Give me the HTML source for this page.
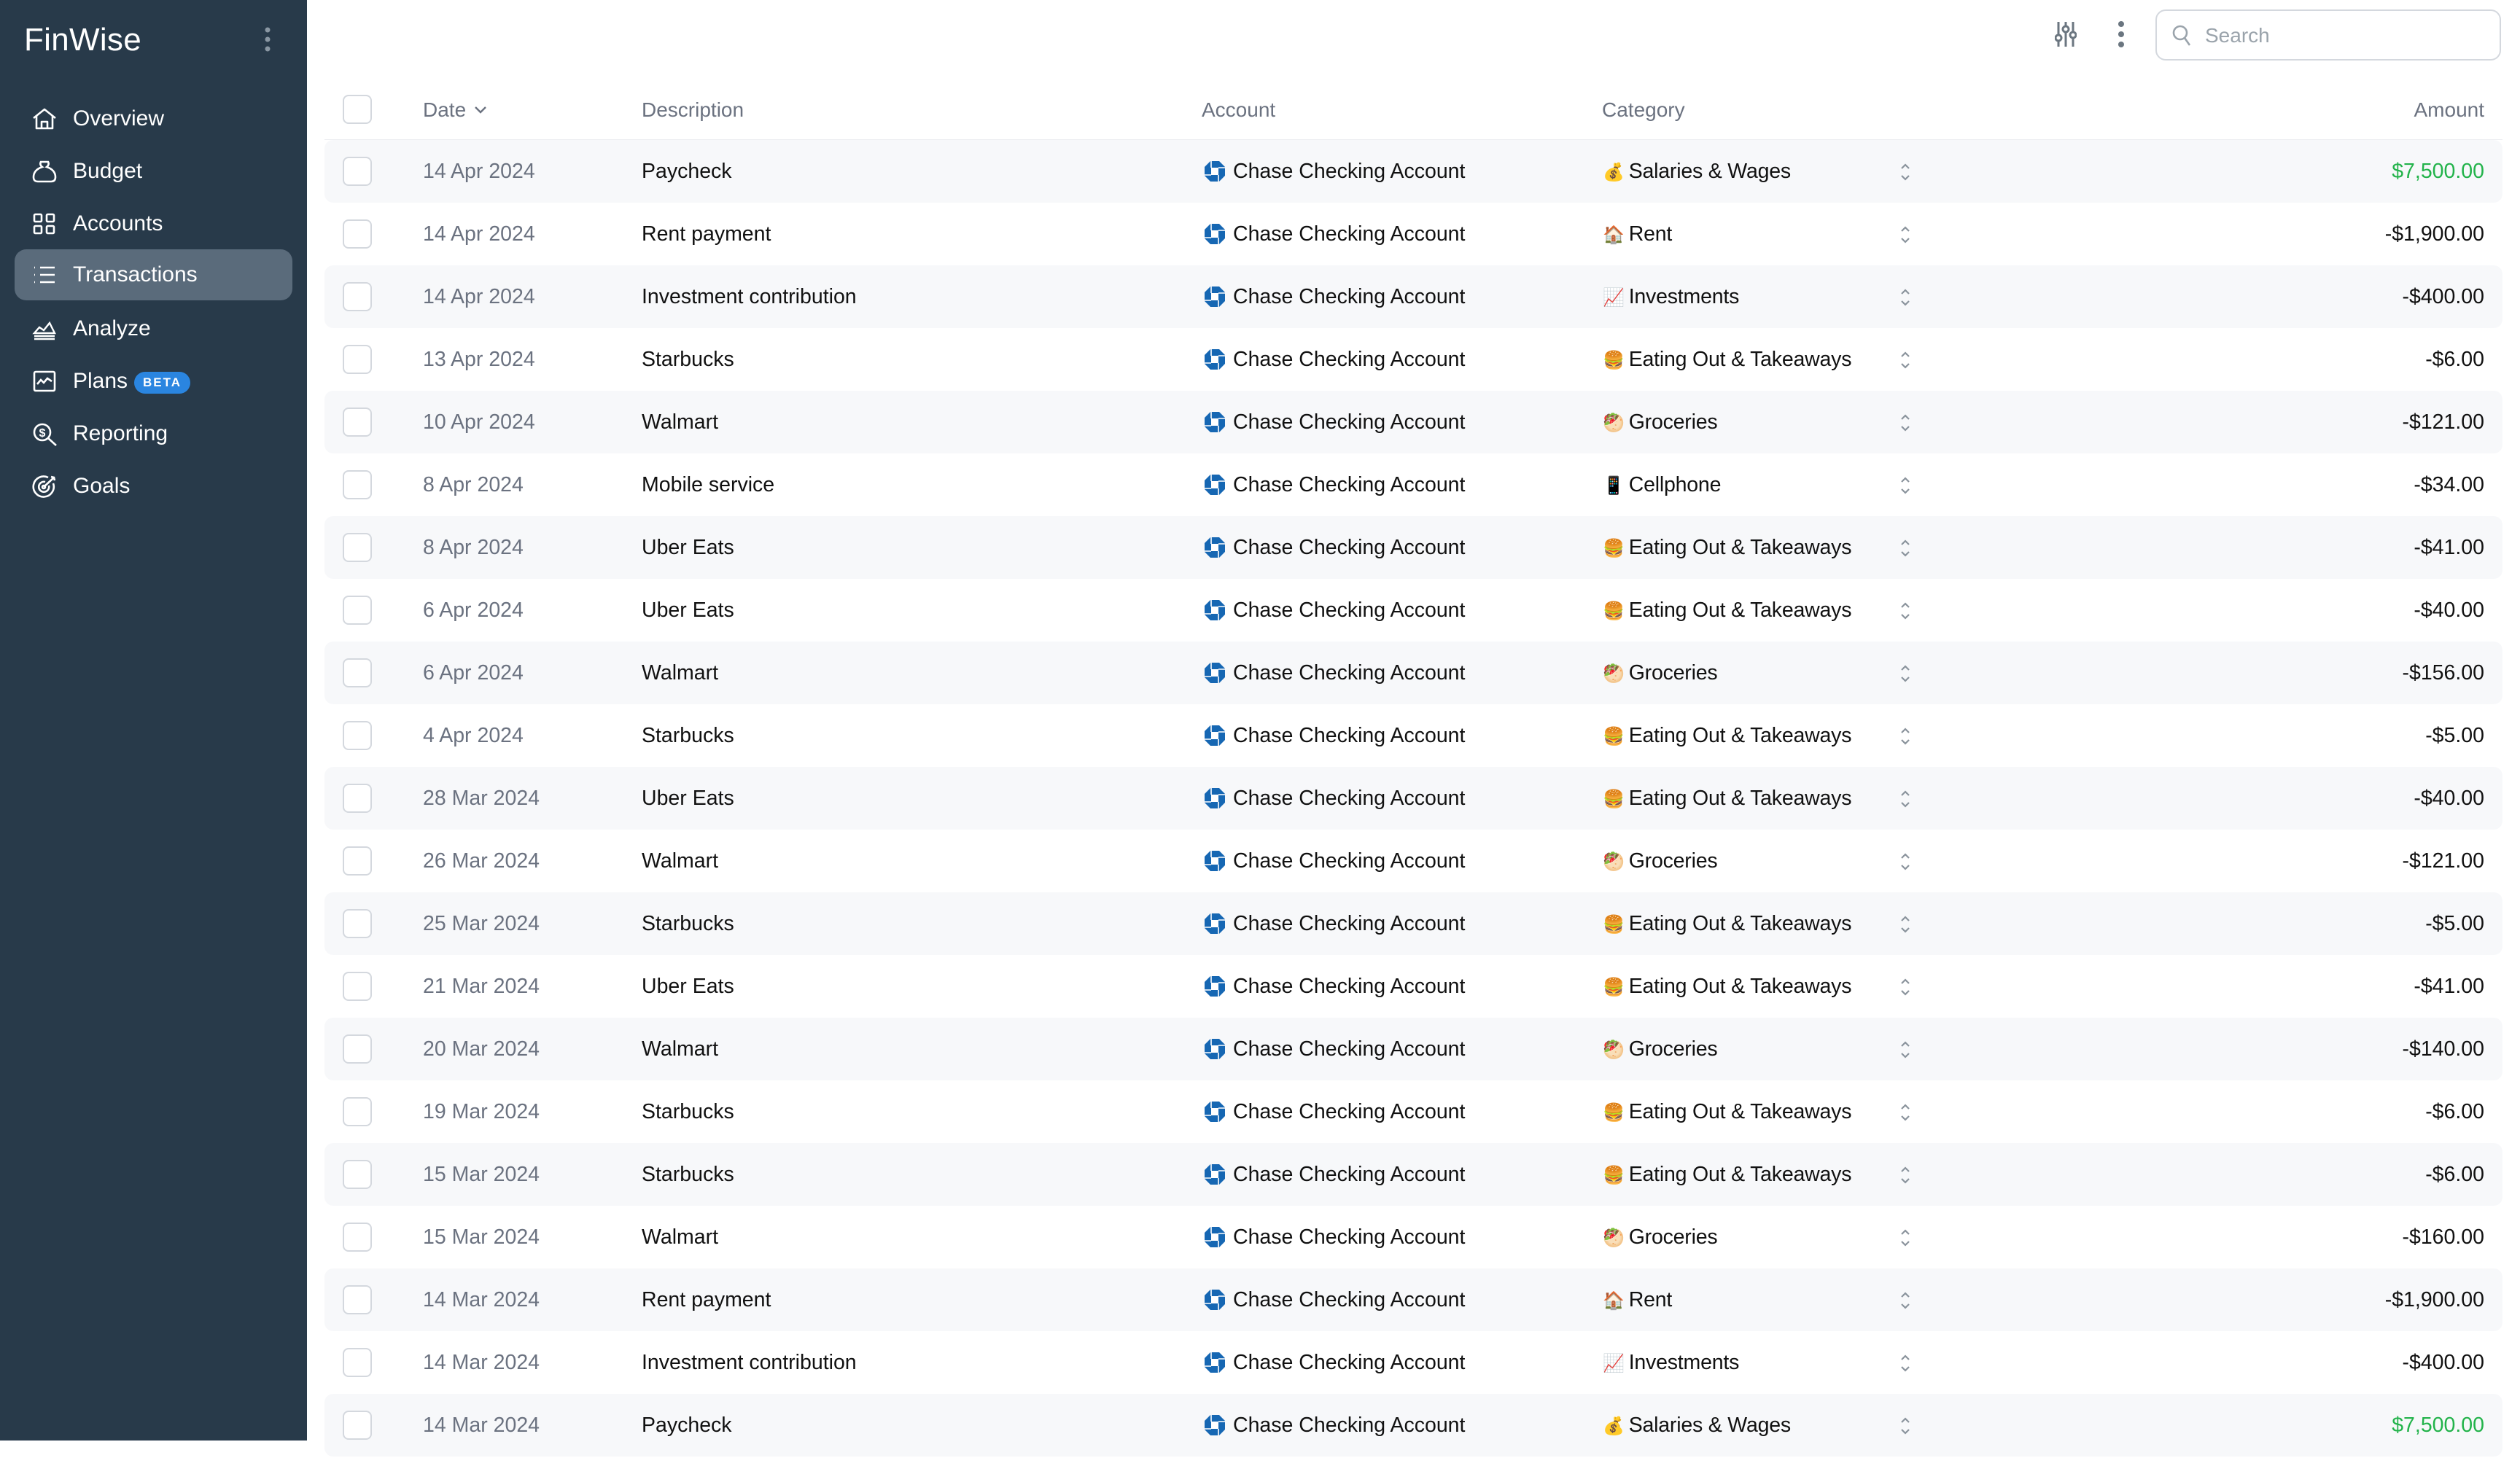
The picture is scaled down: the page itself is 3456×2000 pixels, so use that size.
<!DOCTYPE html>
<html><head><meta charset="utf-8">
<style>
*{box-sizing:border-box;margin:0;padding:0}
html,body{width:3456px;height:1976px;overflow:hidden;background:#fff;font-family:"Liberation Sans","DejaVu Sans",sans-serif}
.side{position:absolute;left:0;top:0;width:421px;height:1976px;background:#283a4a;color:#fff}
.logo{position:absolute;left:33px;top:30px;font-size:44px;letter-spacing:0.3px}
.kebab{position:absolute;left:362px;top:36px}
.nav{position:absolute;left:20px;width:381px;height:70px;border-radius:16px;display:flex;align-items:center;font-size:30px}
.nav.act{background:#5a6b7b}
.nav svg{position:absolute;left:24px;top:19px}
.nav span.t{position:absolute;left:80px}
.beta{display:inline-block;background:#2a85e0;color:#fff;font-size:17px;font-weight:bold;letter-spacing:2px;padding:5px 12px;border-radius:20px;position:absolute;left:164px;top:22px}
.hdr{position:absolute;top:126px;height:50px;font-size:28px;color:#6b7280;display:flex;align-items:center}
.row{position:absolute;left:445px;width:2987px;height:86px;border-radius:12px}
.row.g{background:#f7f8fa}
.row div{position:absolute;top:0;height:86px;line-height:86px;font-size:28.5px;color:#111}
.cb{position:absolute;left:25px;top:23px;width:40px;height:40px;border:2px solid #d4d8de;border-radius:8px;background:#fff}
.d{left:135px;color:#6b7280 !important}
.ds{left:435px}
.ac{left:1206px}
.ac svg{position:absolute;left:0;top:28px}
.ac span{position:absolute;left:40px;white-space:nowrap}
.ca{left:1753px;white-space:nowrap;letter-spacing:-0.2px}
.ca i{font-style:normal;font-size:24px;margin-right:6px}
.ud{left:2160px}
.am{right:25px;text-align:right}
.pos{color:#22b34a !important}
</style></head><body>
<div class="side">
<div class="logo">FinWise</div>
<svg class="kebab" width="10" height="36" viewBox="0 0 10 36"><circle cx="5" cy="5" r="3.5" fill="#8a97a3"/><circle cx="5" cy="18" r="3.5" fill="#8a97a3"/><circle cx="5" cy="31" r="3.5" fill="#8a97a3"/></svg>

<div class="nav" style="top:128px"><svg width="34" height="32" viewBox="0 0 34 32" fill="none" stroke="#fff" stroke-width="2.6" stroke-linejoin="round"><path d="M2 15 L17 3 L32 15"/><path d="M6 12 V29 H28 V12"/><path d="M13 29 V20 H21 V29"/></svg><span class="t">Overview</span></div>
<div class="nav" style="top:200px"><svg width="34" height="32" viewBox="0 0 34 32" fill="none" stroke="#fff" stroke-width="2.6"><path d="M12 3 H22 Q24 7 20 10 Q32 14 32 24 Q32 30 26 30 H8 Q2 30 2 24 Q2 14 14 10 Q10 7 12 3Z"/></svg><span class="t">Budget</span></div>
<div class="nav" style="top:272px"><svg width="34" height="32" viewBox="0 0 34 32" fill="none" stroke="#fff" stroke-width="2.6"><rect x="3" y="3" width="10" height="10" rx="1.5"/><rect x="20" y="3" width="10" height="10" rx="1.5"/><rect x="3" y="19" width="10" height="10" rx="1.5"/><rect x="20" y="19" width="10" height="10" rx="1.5"/></svg><span class="t">Accounts</span></div>
<div class="nav act" style="top:342px"><svg width="34" height="32" viewBox="0 0 34 32" fill="none" stroke="#fff" stroke-width="2.6"><path d="M3 6h1M3 16h1M3 26h1M11 6h20M11 16h20M11 26h20"/></svg><span class="t">Transactions</span></div>
<div class="nav" style="top:416px"><svg width="34" height="32" viewBox="0 0 34 32" fill="none" stroke="#fff" stroke-width="2.4"><path d="M3 22 L10 14 L16 18 L24 8 L31 22Z"/><path d="M3 26H31M3 30H31"/></svg><span class="t">Analyze</span></div>
<div class="nav" style="top:488px"><svg width="34" height="32" viewBox="0 0 34 32" fill="none" stroke="#fff" stroke-width="2.6"><rect x="3" y="3" width="28" height="26" rx="2"/><path d="M7 20 L12 14 L16 18 L21 12 L27 16"/></svg><span class="t">Plans</span><span class="beta">BETA</span></div>
<div class="nav" style="top:560px"><svg width="36" height="34" viewBox="0 0 36 34" fill="none" stroke="#fff" stroke-width="2.6"><circle cx="14" cy="14" r="11"/><path d="M22 22 L33 32"/><text x="14" y="20" font-size="16" fill="#fff" stroke="none" text-anchor="middle" font-weight="bold" font-family="Liberation Sans">$</text></svg><span class="t">Reporting</span></div>
<div class="nav" style="top:632px"><svg width="36" height="34" viewBox="0 0 36 34" fill="none" stroke="#fff" stroke-width="2.6"><path d="M29 12 A14 14 0 1 1 22 4"/><path d="M23 15 A7 7 0 1 1 18 10"/><circle cx="16" cy="17" r="2"/><path d="M16 17 L30 4 M26 3 L30 4 L31 8"/></svg><span class="t">Goals</span></div>
</div>

<svg style="position:absolute;left:2818px;top:28px" width="30" height="38" viewBox="0 0 30 38" fill="none" stroke="#6b7680" stroke-width="3"><path d="M5 2V36M15 2V36M25 2V36"/><circle cx="5" cy="24" r="4" fill="#fff"/><circle cx="15" cy="12" r="4" fill="#fff"/><circle cx="25" cy="20" r="4" fill="#fff"/></svg>
<svg style="position:absolute;left:2904px;top:28px" width="10" height="38" viewBox="0 0 10 38"><circle cx="5" cy="5" r="4" fill="#6b7680"/><circle cx="5" cy="19" r="4" fill="#6b7680"/><circle cx="5" cy="33" r="4" fill="#6b7680"/></svg>
<div style="position:absolute;left:2956px;top:13px;width:474px;height:70px;border:2px solid #d4d8de;border-radius:14px">
<svg style="position:absolute;left:20px;top:18px" width="28" height="32" viewBox="0 0 28 32" fill="none" stroke="#9aa3ab" stroke-width="2.6"><circle cx="12" cy="12" r="9"/><path d="M18 19 L25 29"/></svg>
<span style="position:absolute;left:66px;top:18px;font-size:28px;color:#9aa3ab">Search</span></div>

<div class="cb" style="left:470px;top:130px"></div>
<div class="hdr" style="left:580px">Date <svg style="margin-left:10px" width="20" height="14" viewBox="0 0 20 14" fill="none" stroke="#6b7280" stroke-width="2.4"><path d="M3 3 L10 10 L17 3"/></svg></div>
<div class="hdr" style="left:880px">Description</div>
<div class="hdr" style="left:1648px">Account</div>
<div class="hdr" style="left:2197px">Category</div>
<div class="hdr" style="right:49px">Amount</div>
<div style="position:absolute;left:445px;top:191px;width:2987px;height:1px;background:#eceef1"></div>

<svg width="0" height="0" style="position:absolute"><defs>
<g id="ch"><path d="M9 1 H21 L29 9 V21 L21 29 H9 L1 21 V9Z" fill="#1667b3"/><rect x="10" y="10" width="10" height="10" fill="#fff"/><path d="M10 1 V10 M20 29 V20 M1 20 H10 M29 10 H20" stroke="#fff" stroke-width="1.6"/></g>
<g id="ud" fill="none" stroke="#8a939c" stroke-width="2.2"><path d="M3 8 L8 3 L13 8 M3 18 L8 23 L13 18"/></g>
</defs></svg>

<div class="row g" style="top:192px"><span class="cb"></span><div class="d">14 Apr 2024</div><div class="ds">Paycheck</div><div class="ac"><svg width="30" height="30"><use href="#ch"/></svg><span>Chase Checking Account</span></div><div class="ca"><i>💰</i>Salaries &amp; Wages</div><div class="ud"><svg width="16" height="26" style="vertical-align:middle"><use href="#ud"/></svg></div><div class="am pos">$7,500.00</div></div>
<div class="row" style="top:278px"><span class="cb"></span><div class="d">14 Apr 2024</div><div class="ds">Rent payment</div><div class="ac"><svg width="30" height="30"><use href="#ch"/></svg><span>Chase Checking Account</span></div><div class="ca"><i>🏠</i>Rent</div><div class="ud"><svg width="16" height="26" style="vertical-align:middle"><use href="#ud"/></svg></div><div class="am">-$1,900.00</div></div>
<div class="row g" style="top:364px"><span class="cb"></span><div class="d">14 Apr 2024</div><div class="ds">Investment contribution</div><div class="ac"><svg width="30" height="30"><use href="#ch"/></svg><span>Chase Checking Account</span></div><div class="ca"><i>📈</i>Investments</div><div class="ud"><svg width="16" height="26" style="vertical-align:middle"><use href="#ud"/></svg></div><div class="am">-$400.00</div></div>
<div class="row" style="top:450px"><span class="cb"></span><div class="d">13 Apr 2024</div><div class="ds">Starbucks</div><div class="ac"><svg width="30" height="30"><use href="#ch"/></svg><span>Chase Checking Account</span></div><div class="ca"><i>🍔</i>Eating Out &amp; Takeaways</div><div class="ud"><svg width="16" height="26" style="vertical-align:middle"><use href="#ud"/></svg></div><div class="am">-$6.00</div></div>
<div class="row g" style="top:536px"><span class="cb"></span><div class="d">10 Apr 2024</div><div class="ds">Walmart</div><div class="ac"><svg width="30" height="30"><use href="#ch"/></svg><span>Chase Checking Account</span></div><div class="ca"><i>🥙</i>Groceries</div><div class="ud"><svg width="16" height="26" style="vertical-align:middle"><use href="#ud"/></svg></div><div class="am">-$121.00</div></div>
<div class="row" style="top:622px"><span class="cb"></span><div class="d">8 Apr 2024</div><div class="ds">Mobile service</div><div class="ac"><svg width="30" height="30"><use href="#ch"/></svg><span>Chase Checking Account</span></div><div class="ca"><i>📱</i>Cellphone</div><div class="ud"><svg width="16" height="26" style="vertical-align:middle"><use href="#ud"/></svg></div><div class="am">-$34.00</div></div>
<div class="row g" style="top:708px"><span class="cb"></span><div class="d">8 Apr 2024</div><div class="ds">Uber Eats</div><div class="ac"><svg width="30" height="30"><use href="#ch"/></svg><span>Chase Checking Account</span></div><div class="ca"><i>🍔</i>Eating Out &amp; Takeaways</div><div class="ud"><svg width="16" height="26" style="vertical-align:middle"><use href="#ud"/></svg></div><div class="am">-$41.00</div></div>
<div class="row" style="top:794px"><span class="cb"></span><div class="d">6 Apr 2024</div><div class="ds">Uber Eats</div><div class="ac"><svg width="30" height="30"><use href="#ch"/></svg><span>Chase Checking Account</span></div><div class="ca"><i>🍔</i>Eating Out &amp; Takeaways</div><div class="ud"><svg width="16" height="26" style="vertical-align:middle"><use href="#ud"/></svg></div><div class="am">-$40.00</div></div>
<div class="row g" style="top:880px"><span class="cb"></span><div class="d">6 Apr 2024</div><div class="ds">Walmart</div><div class="ac"><svg width="30" height="30"><use href="#ch"/></svg><span>Chase Checking Account</span></div><div class="ca"><i>🥙</i>Groceries</div><div class="ud"><svg width="16" height="26" style="vertical-align:middle"><use href="#ud"/></svg></div><div class="am">-$156.00</div></div>
<div class="row" style="top:966px"><span class="cb"></span><div class="d">4 Apr 2024</div><div class="ds">Starbucks</div><div class="ac"><svg width="30" height="30"><use href="#ch"/></svg><span>Chase Checking Account</span></div><div class="ca"><i>🍔</i>Eating Out &amp; Takeaways</div><div class="ud"><svg width="16" height="26" style="vertical-align:middle"><use href="#ud"/></svg></div><div class="am">-$5.00</div></div>
<div class="row g" style="top:1052px"><span class="cb"></span><div class="d">28 Mar 2024</div><div class="ds">Uber Eats</div><div class="ac"><svg width="30" height="30"><use href="#ch"/></svg><span>Chase Checking Account</span></div><div class="ca"><i>🍔</i>Eating Out &amp; Takeaways</div><div class="ud"><svg width="16" height="26" style="vertical-align:middle"><use href="#ud"/></svg></div><div class="am">-$40.00</div></div>
<div class="row" style="top:1138px"><span class="cb"></span><div class="d">26 Mar 2024</div><div class="ds">Walmart</div><div class="ac"><svg width="30" height="30"><use href="#ch"/></svg><span>Chase Checking Account</span></div><div class="ca"><i>🥙</i>Groceries</div><div class="ud"><svg width="16" height="26" style="vertical-align:middle"><use href="#ud"/></svg></div><div class="am">-$121.00</div></div>
<div class="row g" style="top:1224px"><span class="cb"></span><div class="d">25 Mar 2024</div><div class="ds">Starbucks</div><div class="ac"><svg width="30" height="30"><use href="#ch"/></svg><span>Chase Checking Account</span></div><div class="ca"><i>🍔</i>Eating Out &amp; Takeaways</div><div class="ud"><svg width="16" height="26" style="vertical-align:middle"><use href="#ud"/></svg></div><div class="am">-$5.00</div></div>
<div class="row" style="top:1310px"><span class="cb"></span><div class="d">21 Mar 2024</div><div class="ds">Uber Eats</div><div class="ac"><svg width="30" height="30"><use href="#ch"/></svg><span>Chase Checking Account</span></div><div class="ca"><i>🍔</i>Eating Out &amp; Takeaways</div><div class="ud"><svg width="16" height="26" style="vertical-align:middle"><use href="#ud"/></svg></div><div class="am">-$41.00</div></div>
<div class="row g" style="top:1396px"><span class="cb"></span><div class="d">20 Mar 2024</div><div class="ds">Walmart</div><div class="ac"><svg width="30" height="30"><use href="#ch"/></svg><span>Chase Checking Account</span></div><div class="ca"><i>🥙</i>Groceries</div><div class="ud"><svg width="16" height="26" style="vertical-align:middle"><use href="#ud"/></svg></div><div class="am">-$140.00</div></div>
<div class="row" style="top:1482px"><span class="cb"></span><div class="d">19 Mar 2024</div><div class="ds">Starbucks</div><div class="ac"><svg width="30" height="30"><use href="#ch"/></svg><span>Chase Checking Account</span></div><div class="ca"><i>🍔</i>Eating Out &amp; Takeaways</div><div class="ud"><svg width="16" height="26" style="vertical-align:middle"><use href="#ud"/></svg></div><div class="am">-$6.00</div></div>
<div class="row g" style="top:1568px"><span class="cb"></span><div class="d">15 Mar 2024</div><div class="ds">Starbucks</div><div class="ac"><svg width="30" height="30"><use href="#ch"/></svg><span>Chase Checking Account</span></div><div class="ca"><i>🍔</i>Eating Out &amp; Takeaways</div><div class="ud"><svg width="16" height="26" style="vertical-align:middle"><use href="#ud"/></svg></div><div class="am">-$6.00</div></div>
<div class="row" style="top:1654px"><span class="cb"></span><div class="d">15 Mar 2024</div><div class="ds">Walmart</div><div class="ac"><svg width="30" height="30"><use href="#ch"/></svg><span>Chase Checking Account</span></div><div class="ca"><i>🥙</i>Groceries</div><div class="ud"><svg width="16" height="26" style="vertical-align:middle"><use href="#ud"/></svg></div><div class="am">-$160.00</div></div>
<div class="row g" style="top:1740px"><span class="cb"></span><div class="d">14 Mar 2024</div><div class="ds">Rent payment</div><div class="ac"><svg width="30" height="30"><use href="#ch"/></svg><span>Chase Checking Account</span></div><div class="ca"><i>🏠</i>Rent</div><div class="ud"><svg width="16" height="26" style="vertical-align:middle"><use href="#ud"/></svg></div><div class="am">-$1,900.00</div></div>
<div class="row" style="top:1826px"><span class="cb"></span><div class="d">14 Mar 2024</div><div class="ds">Investment contribution</div><div class="ac"><svg width="30" height="30"><use href="#ch"/></svg><span>Chase Checking Account</span></div><div class="ca"><i>📈</i>Investments</div><div class="ud"><svg width="16" height="26" style="vertical-align:middle"><use href="#ud"/></svg></div><div class="am">-$400.00</div></div>
<div class="row g" style="top:1912px"><span class="cb"></span><div class="d">14 Mar 2024</div><div class="ds">Paycheck</div><div class="ac"><svg width="30" height="30"><use href="#ch"/></svg><span>Chase Checking Account</span></div><div class="ca"><i>💰</i>Salaries &amp; Wages</div><div class="ud"><svg width="16" height="26" style="vertical-align:middle"><use href="#ud"/></svg></div><div class="am pos">$7,500.00</div></div>
</body></html>
